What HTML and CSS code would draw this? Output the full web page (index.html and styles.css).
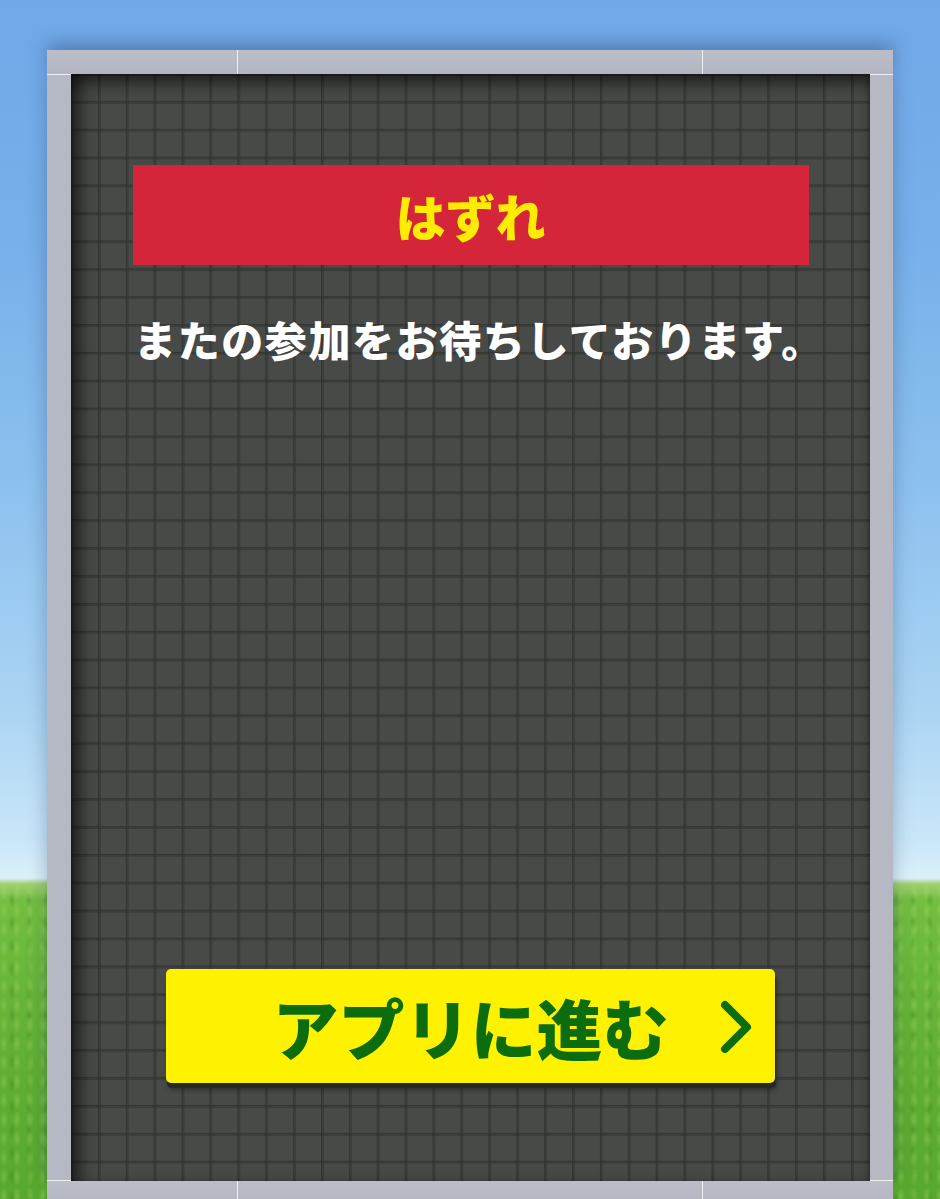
FILE: index.html
```html
<!DOCTYPE html>
<html lang="ja">
<head>
<meta charset="utf-8">
<title>はずれ</title>
<link rel="stylesheet" href="styles.css">
</head>
<body>
<div class="scene">
  <div class="frame">
    <div class="bar bar-top">
      <div class="seg seg-side"></div>
      <div class="seg seg-mid"></div>
      <div class="seg seg-side"></div>
    </div>
    <div class="middle">
      <div class="post post-left"></div>
      <main class="board">
        <div class="banner">はずれ</div>
        <p class="message">またの参加をお待ちしております。</p>
        <div class="spacer"></div>
        <a class="cta" href="#">
          <span class="cta-label">アプリに進む</span>
          <svg class="chevron" width="36" height="56" viewBox="0 0 36 56" aria-hidden="true">
            <polyline points="6,6 28,28 6,50" fill="none" stroke="#0b6d0e" stroke-width="8" stroke-linecap="round" stroke-linejoin="round"/>
          </svg>
        </a>
      </main>
      <div class="post post-right"></div>
    </div>
    <div class="bar bar-bottom">
      <div class="seg seg-side"></div>
      <div class="seg seg-mid"></div>
      <div class="seg seg-side"></div>
    </div>
  </div>
</div>
</body>
</html>
```

FILE: styles.css
```css
html, body {
  margin: 0;
  padding: 0;
  height: 100%;
  overflow: hidden;
}

body {
  font-family: "Noto Sans CJK JP", "Noto Sans", sans-serif;
  background:
    linear-gradient(180deg,
      #70a8e8 0px,
      #78b0ea 250px,
      #8cc0ee 480px,
      #a9d3f3 700px,
      #c9e6f8 840px,
      #dcf0fb 878px,
      #9fd070 884px,
      #74be40 900px,
      #68b63a 980px,
      #5fae33 1080px,
      #58a82f 1199px);
}

.scene {
  position: relative;
  height: 1199px;
}

/* soft grass texture */
.scene::before {
  content: "";
  position: absolute;
  left: 0;
  right: 0;
  top: 884px;
  bottom: 0;
  background:
    radial-gradient(ellipse 6px 14px at 30% 40%, rgba(170, 220, 110, 0.35), transparent 70%),
    radial-gradient(ellipse 5px 12px at 70% 70%, rgba(40, 110, 20, 0.25), transparent 70%);
  background-size: 13px 19px, 17px 23px;
  filter: blur(0.6px);
}

.frame {
  position: relative;
  margin-left: 47px;
  padding-top: 50px;
  width: 846px;
}

.bar {
  display: flex;
  height: 24px;
  background: #b6b9c3;
  box-shadow: 0 -6px 18px rgba(20, 40, 80, 0.35);
}

.bar-bottom {
  box-shadow: none;
}

.seg {
  height: 100%;
  background: linear-gradient(180deg, #bbbec8, #b3b6c0);
}

.seg-side {
  width: 190px;
}

.seg-mid {
  flex: 1;
  border-left: 1px solid #eef0f4;
  border-right: 1px solid #eef0f4;
}

.middle {
  display: flex;
  height: 1107px;
  box-shadow: 0 0 18px rgba(20, 40, 80, 0.3);
}

.post {
  background: #b6b9c3;
  border-top: 1px solid #eef0f4;
  border-bottom: 1px solid #eef0f4;
  box-sizing: border-box;
}

.post-left {
  width: 24px;
}

.post-right {
  width: 23px;
}

.board {
  flex: 1;
  display: flex;
  flex-direction: column;
  align-items: center;
  padding: 91px 0 98px;
  box-sizing: border-box;
  background-color: #474a47;
  background-image:
    linear-gradient(90deg, rgba(44,46,44,0.7) 0 1px, rgba(50,52,50,0.55) 1px 3px, transparent 3px),
    linear-gradient(180deg, rgba(44,46,44,0.7) 0 1px, rgba(50,52,50,0.55) 1px 3px, transparent 3px);
  background-size: 27.9px 27.9px;
  background-position: -1px -1px;
  box-shadow:
    inset 0 14px 18px -6px rgba(0, 0, 0, 0.6),
    inset 16px 0 18px -8px rgba(0, 0, 0, 0.6),
    inset -3px 0 4px -2px rgba(0, 0, 0, 0.3);
}

.banner {
  width: 676px;
  height: 100px;
  background: #d4253b;
  color: #ffec00;
  font-size: 50px;
  font-weight: 900;
  line-height: 100px;
  text-align: center;
}

.message {
  margin: 53px 0 0;
  padding-left: 18px;
  color: #ffffff;
  font-size: 42px;
  font-weight: 900;
  line-height: 42px;
  text-align: center;
  letter-spacing: 1.6px;
}

.spacer {
  flex: 1;
}

.cta {
  position: relative;
  display: flex;
  align-items: center;
  justify-content: center;
  width: 609px;
  height: 114px;
  border-radius: 5px;
  background: #fff200;
  text-decoration: none;
  box-shadow: 1px 5px 0 #262826, 2px 7px 4px rgba(0,0,0,0.35);
}

.cta-label {
  color: #0b6d0e;
  font-size: 66px;
  font-weight: 900;
  line-height: 1;
}

.chevron {
  position: absolute;
  right: 20px;
  top: 30px;
}
```
